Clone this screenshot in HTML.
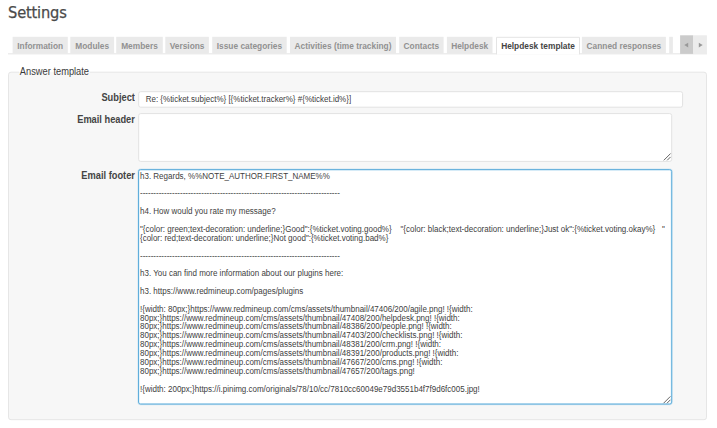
<!DOCTYPE html>
<html><head><meta charset="utf-8"><title>Settings</title>
<style>
html,body{margin:0;padding:0;background:#fff;}
body{width:717px;height:428px;overflow:hidden;position:relative;font-family:"Liberation Sans",sans-serif;color:#444;font-size:9.3px;}
#shapes{position:absolute;left:0;top:0;}
#title{position:absolute;left:8.1px;top:0.6px;transform:translateY(0.6px);-webkit-text-stroke:0.25px #4a4a4a;margin:0;font-family:"DejaVu Sans Condensed","DejaVu Sans","Liberation Sans",sans-serif;font-stretch:condensed;font-size:16.3px;line-height:22px;color:#4a4a4a;font-weight:normal;letter-spacing:-0.2px;white-space:nowrap;}
.tab{transform:scaleY(1.07);transform-origin:50% 60%;position:absolute;top:38.2px;height:16px;line-height:16px;color:#919191;font-weight:bold;font-size:8.35px;text-align:center;white-space:nowrap;}
.tab.sel{color:#444;}
#legend{transform:scaleY(1.18);transform-origin:0 9.4px;position:absolute;left:19.8px;top:65.7px;font-size:9.3px;line-height:12px;color:#3a3a3a;white-space:nowrap;}
.lbl{transform:scaleY(1.14);transform-origin:100% 65%;position:absolute;left:0;width:134.9px;text-align:right;font-weight:bold;font-size:9.27px;line-height:12px;color:#444;white-space:nowrap;}
.txt{position:absolute;font-size:8px;color:#404040;}
#subj{left:145.7px;top:92.9px;line-height:14px;white-space:pre;transform:scaleY(1.14);transform-origin:0 10px;}
#ftr{left:140px;top:172.3px;transform:scaleY(1.109);transform-origin:0 0;width:531px;line-height:8px;white-space:pre-wrap;word-wrap:break-word;overflow-wrap:break-word;}
</style></head><body>
<svg id="shapes" width="717" height="428" viewBox="0 0 717 428">
<rect x="8" y="53.4" width="699" height="0.9" fill="#e2e2e2"/>
<rect x="12.6" y="36.8" width="55.2" height="16.7" fill="#eaeaea"/>
<rect x="70.3" y="36.8" width="43.8" height="16.7" fill="#eaeaea"/>
<rect x="116.2" y="36.8" width="46.6" height="16.7" fill="#eaeaea"/>
<rect x="165.3" y="36.8" width="43.6" height="16.7" fill="#eaeaea"/>
<rect x="212.2" y="36.8" width="74.5" height="16.7" fill="#eaeaea"/>
<rect x="290.0" y="36.8" width="106.0" height="16.7" fill="#eaeaea"/>
<rect x="399.2" y="36.8" width="44.4" height="16.7" fill="#eaeaea"/>
<rect x="446.9" y="36.8" width="45.6" height="16.7" fill="#eaeaea"/>
<path d="M496.5 54.4V37.3H579.5V54.4" fill="#fff" stroke="#e4e4e4" stroke-width="1"/>
<rect x="581.9" y="36.8" width="84.0" height="16.7" fill="#eaeaea"/>
<rect x="669.2" y="36.8" width="3.7" height="16.7" fill="#eaeaea"/>
<rect x="680.1" y="35.3" width="13.2" height="18.6" fill="#cbcbcb"/>
<rect x="693.3" y="35.3" width="13.6" height="18.6" fill="#ececec"/>
<path d="M684.3 45.1L688.2 42.8V47.4Z" fill="#999"/>
<path d="M702.7 45.1L698.8 42.8V47.4Z" fill="#999"/>
<rect x="8.5" y="72.2" width="698" height="347.5" rx="2.5" fill="#f7f7f7" stroke="#e6e6e6" stroke-width="1"/>
<rect x="19.2" y="71" width="70.2" height="1.5" fill="#fff"/>
<rect x="19.2" y="72.4" width="70.2" height="1.6" fill="#f7f7f7"/>
<rect x="138.7" y="91.7" width="543.9" height="15.5" rx="2" fill="#fff" stroke="#e2e2e2" stroke-width="1"/>
<rect x="138.7" y="113.6" width="533" height="47.8" rx="2" fill="#fff" stroke="#e2e2e2" stroke-width="1"/>
<rect x="138.5" y="169.6" width="533.2" height="234.5" rx="2" fill="#fff" stroke="#9fd2ee" stroke-opacity="0.4" stroke-width="2.2"/>
<rect x="138.5" y="169.6" width="533.2" height="234.5" rx="2" fill="none" stroke="#60aedb" stroke-width="1"/>
<path d="M663.8000000000001 160.3L670.6 153.5M667.2 160.3L670.6 156.9" stroke="#555" stroke-width="0.9" fill="none"/>
<path d="M663.6 403.2L670.4 396.4M667.0 403.2L670.4 399.8" stroke="#555" stroke-width="0.9" fill="none"/>
</svg>
<h2 id="title">Settings</h2>
<div class="tab" style="left:12.6px;width:55.2px">Information</div>
<div class="tab" style="left:70.3px;width:43.8px">Modules</div>
<div class="tab" style="left:116.2px;width:46.6px">Members</div>
<div class="tab" style="left:165.3px;width:43.6px">Versions</div>
<div class="tab" style="left:212.2px;width:74.5px">Issue categories</div>
<div class="tab" style="left:290.0px;width:106.0px">Activities (time tracking)</div>
<div class="tab" style="left:399.2px;width:44.4px">Contacts</div>
<div class="tab" style="left:446.9px;width:45.6px">Helpdesk</div>
<div class="tab sel" style="left:496.0px;width:84.0px">Helpdesk template</div>
<div class="tab" style="left:581.9px;width:84.0px">Canned responses</div>
<div id="legend">Answer template</div>
<div class="lbl" style="top:92.1px">Subject</div>
<div class="txt" id="subj">Re: {%ticket.subject%} [{%ticket.tracker%} #{%ticket.id%}]</div>
<div class="lbl" style="top:113.5px">Email header</div>
<div class="lbl" style="top:169.5px">Email footer</div>
<div class="txt" id="ftr">h3. Regards, %%NOTE_AUTHOR.FIRST_NAME%%

---------------------------------------------------------------------------

h4. How would you rate my message?

"{color: green;text-decoration: underline;}Good":{%ticket.voting.good%}    "{color: black;text-decoration: underline;}Just ok":{%ticket.voting.okay%}   "{color: red;text-decoration: underline;}Not good":{%ticket.voting.bad%}

---------------------------------------------------------------------------

h3. You can find more information about our plugins here:

h3. https://www.redmineup.com/pages/plugins

!{width: 80px;}https://www.redmineup.com/cms/assets/thumbnail/47406/200/agile.png! !{width: 80px;}https://www.redmineup.com/cms/assets/thumbnail/47408/200/helpdesk.png! !{width: 80px;}https://www.redmineup.com/cms/assets/thumbnail/48386/200/people.png! !{width: 80px;}https://www.redmineup.com/cms/assets/thumbnail/47403/200/checklists.png! !{width: 80px;}https://www.redmineup.com/cms/assets/thumbnail/48381/200/crm.png! !{width: 80px;}https://www.redmineup.com/cms/assets/thumbnail/48391/200/products.png! !{width: 80px;}https://www.redmineup.com/cms/assets/thumbnail/47667/200/cms.png! !{width: 80px;}https://www.redmineup.com/cms/assets/thumbnail/47657/200/tags.png!

!{width: 200px;}https://i.pinimg.com/originals/78/10/cc/7810cc60049e79d3551b4f7f9d6fc005.jpg!</div>
</body></html>
